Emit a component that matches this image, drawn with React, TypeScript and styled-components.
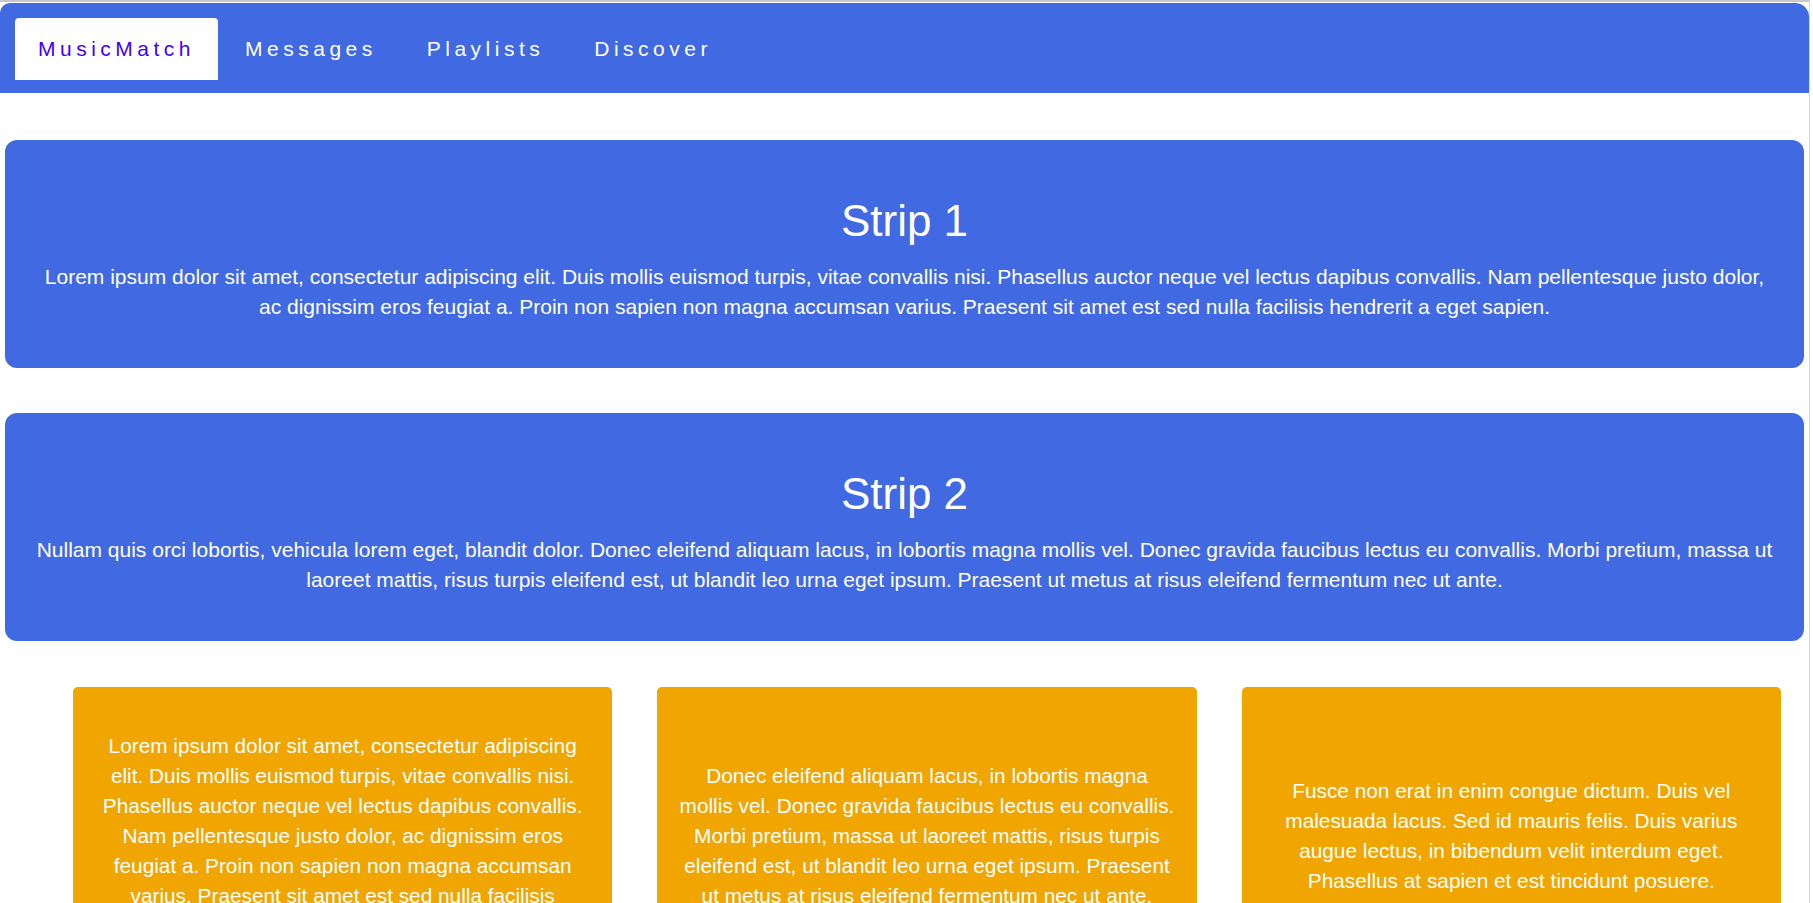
import React from "react";
import styled, { createGlobalStyle } from "styled-components";

const GlobalStyle = createGlobalStyle`
  html, body {
    margin: 0;
    padding: 0;
    background: #ffffff;
  }
  body {
    font-family: "Liberation Sans", Arial, sans-serif;
    font-size: 21px;
    color: #ffffff;
  }
`;

const Page = styled.div`
  width: 1810px;
  min-height: 100vh;
  box-sizing: border-box;
  border-top: 2px solid #c8c8c8;
  border-right: 1px solid #d4d4d4;
  padding-top: 1px;
`;

const NavBar = styled.nav`
  display: flex;
  align-items: flex-start;
  gap: 4px;
  padding: 15px 15px 13px;
  background: #4169e1;
  border-radius: 10px 14px 0 0;
`;

const NavLink = styled.a<{ $active?: boolean }>`
  display: flex;
  align-items: center;
  height: 62px;
  padding: 0 23px;
  font-size: 21px;
  letter-spacing: 4.5px;
  text-decoration: none;
  cursor: pointer;
  color: ${(p) => (p.$active ? "#3f00ff" : "#ffffff")};
  background: ${(p) => (p.$active ? "#ffffff" : "transparent")};
  border-radius: 4px 4px 0 0;
`;

const Main = styled.main`
  display: flex;
  flex-direction: column;
  gap: 45px;
  padding: 47px 5px 0;
`;

const Strip = styled.section`
  background: #4169e1;
  border-radius: 12px;
  padding: 56px 28px 46px;
  text-align: center;
`;

const StripTitle = styled.h1`
  margin: 0 0 16px;
  font-size: 44px;
  font-weight: normal;
  line-height: 50px;
`;

const Text = styled.p<{ $size?: number }>`
  margin: 0;
  font-size: ${(p) => p.$size ?? 21}px;
  line-height: 30px;
`;

const CardRow = styled.div`
  display: flex;
  gap: 45px;
  margin-top: 1px;
  padding: 0 23px 0 68px;
`;

const Card = styled.div`
  flex: 1;
  display: flex;
  align-items: center;
  background: #f0a500;
  border-radius: 5px;
  padding: 44px 21px;
  text-align: center;
`;

const links = ["MusicMatch", "Messages", "Playlists", "Discover"];

const strips = [
  {
    title: "Strip 1",
    text: "Lorem ipsum dolor sit amet, consectetur adipiscing elit. Duis mollis euismod turpis, vitae convallis nisi. Phasellus auctor neque vel lectus dapibus convallis. Nam pellentesque justo dolor, ac dignissim eros feugiat a. Proin non sapien non magna accumsan varius. Praesent sit amet est sed nulla facilisis hendrerit a eget sapien.",
  },
  {
    title: "Strip 2",
    text: "Nullam quis orci lobortis, vehicula lorem eget, blandit dolor. Donec eleifend aliquam lacus, in lobortis magna mollis vel. Donec gravida faucibus lectus eu convallis. Morbi pretium, massa ut laoreet mattis, risus turpis eleifend est, ut blandit leo urna eget ipsum. Praesent ut metus at risus eleifend fermentum nec ut ante.",
  },
];

const cards = [
  "Lorem ipsum dolor sit amet, consectetur adipiscing elit. Duis mollis euismod turpis, vitae convallis nisi. Phasellus auctor neque vel lectus dapibus convallis. Nam pellentesque justo dolor, ac dignissim eros feugiat a. Proin non sapien non magna accumsan varius. Praesent sit amet est sed nulla facilisis hendrerit a eget sapien.",
  "Donec eleifend aliquam lacus, in lobortis magna mollis vel. Donec gravida faucibus lectus eu convallis. Morbi pretium, massa ut laoreet mattis, risus turpis eleifend est, ut blandit leo urna eget ipsum. Praesent ut metus at risus eleifend fermentum nec ut ante.",
  "Fusce non erat in enim congue dictum. Duis vel malesuada lacus. Sed id mauris felis. Duis varius augue lectus, in bibendum velit interdum eget. Phasellus at sapien et est tincidunt posuere.",
];

const App = () => {
  return (
    <Page>
      <GlobalStyle />
      <NavBar>
        {links.map((l, i) => (
          <NavLink key={l} $active={i === 0}>
            {l}
          </NavLink>
        ))}
      </NavBar>
      <Main>
        {strips.map((s) => (
          <Strip key={s.title}>
            <StripTitle>{s.title}</StripTitle>
            <Text>{s.text}</Text>
          </Strip>
        ))}
        <CardRow>
          {cards.map((c, i) => (
            <Card key={i}>
              <Text $size={20.8}>{c}</Text>
            </Card>
          ))}
        </CardRow>
      </Main>
    </Page>
  );
};

export default App;
